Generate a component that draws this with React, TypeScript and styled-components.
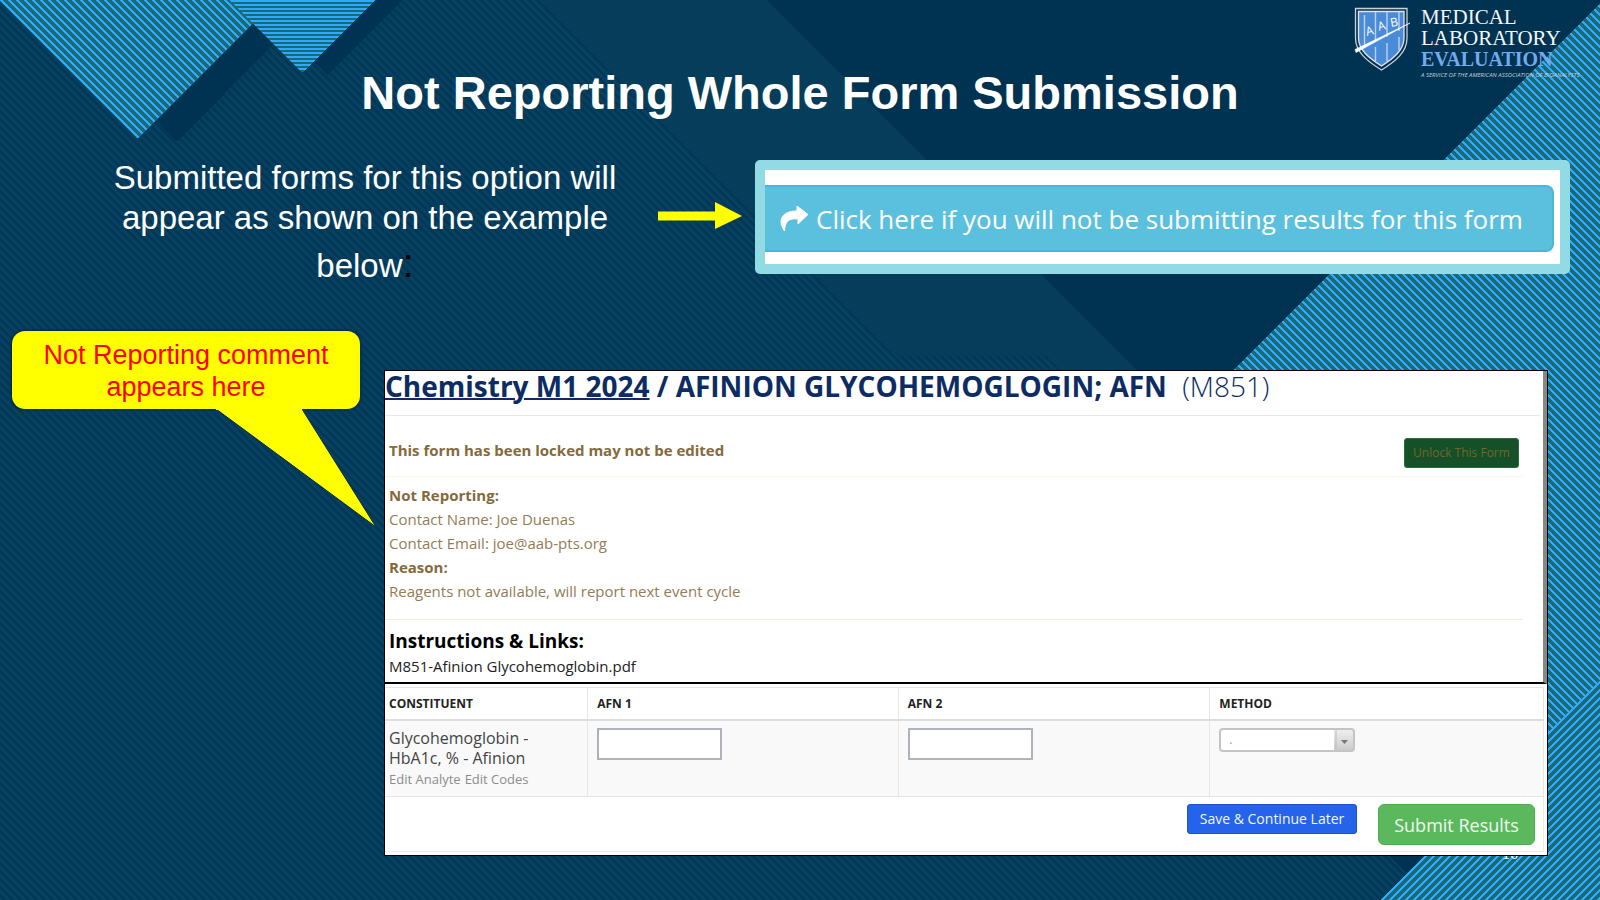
import React from "react";
import styled, { createGlobalStyle } from "styled-components";

const sans = `"Liberation Sans", Arial, sans-serif`;
const ui = `"Open Sans", "Noto Sans", sans-serif`;

const GlobalStyle = createGlobalStyle`
  *, *::before, *::after { box-sizing: border-box; }
  body { margin: 0; background: #003252; font-family: ${sans}; }
  h1, h2, h3, p { margin: 0; }
  button, input, select { font-family: inherit; margin: 0; }
`;

const Slide = styled.main`
  position: relative;
  isolation: isolate;
  overflow: hidden;
  min-height: 100vh;
  display: flex;
  flex-direction: column;
`;

const Backdrop = styled.svg`
  position: absolute;
  inset: 0;
  width: 100%;
  height: 100%;
  z-index: -2;
`;

const Header = styled.header`
  display: grid;
  grid-template-columns: 1fr auto 1fr;
  height: 158px;
`;

const Title = styled.h1`
  grid-column: 2;
  padding-top: 66px;
  font-size: 47px;
  line-height: 54px;
  font-weight: 700;
  color: #fff;
  white-space: nowrap;
`;

const Brand = styled.div`
  justify-self: end;
  display: flex;
  gap: 11px;
  padding-top: 7px;
  width: 246px;
`;

const Shield = styled.svg`
  flex: none;
  width: 56px;
  height: 64px;
`;

const BrandWords = styled.div`
  display: flex;
  flex-direction: column;
  font-family: "Liberation Serif", "Times New Roman", serif;
  white-space: nowrap;
`;

const BrandLine = styled.span<{ $accent?: boolean }>`
  font-size: ${(p) => (p.$accent ? 20 : 21)}px;
  line-height: 21px;
  color: ${(p) => (p.$accent ? "#72aaeb" : "#f4f7fa")};
  font-weight: ${(p) => (p.$accent ? 700 : 400)};
`;

const BrandNote = styled.span`
  font: italic 6px/10px ${ui};
  color: #c3d0db;
`;

const Intro = styled.section`
  display: grid;
  grid-template-columns: 586fr 84px 828fr;
  padding: 0 30px 0 72px;
`;

const Lead = styled.p`
  text-align: center;
  font-size: 33px;
  line-height: 40px;
  color: #fff;
`;

const LeadLine = styled.span<{ $height: number }>`
  display: block;
  line-height: ${(p) => p.$height}px;
`;

const Colon = styled.span`
  font-size: 40px;
  color: #000;
`;

const Arrow = styled.svg`
  width: 84px;
  height: 28px;
  margin-top: 44px;
`;

const Frame = styled.div`
  margin: 2px 0 0 13px;
  height: 114px;
  border: 10px solid #92dbe4;
  border-radius: 5px;
  background: #fff;
  padding: 15px 6px 12px 0;
`;

const DeclineButton = styled.button`
  display: flex;
  align-items: center;
  gap: 8px;
  width: 100%;
  height: 67px;
  padding: 0 0 0 15px;
  border: 2px solid #46b8da;
  border-left: 0;
  border-radius: 0 8px 8px 0;
  background: #5bc0de;
  color: #fff;
  font-family: ${ui};
  font-size: 26px;
  line-height: 36px;
  white-space: nowrap;
`;

const Example = styled.section`
  display: grid;
  grid-template-columns: 348px 1fr;
  gap: 24px;
  align-items: start;
  padding: 40px 52px 24px 12px;
`;

const Callout = styled.aside`
  position: relative;
  height: 78px;
  padding: 8px 0;
  border-radius: 13px;
  background: #ff0;
  box-shadow: 0 0 2px 1px #00294a;
  color: #f00;
  font-size: 27px;
  line-height: 32px;
  text-align: center;
`;

const Tail = styled.svg`
  position: absolute;
  left: 200px;
  top: 77px;
  width: 166px;
  height: 120px;
`;

const Panel = styled.article`
  margin-top: 39px;
  border: 1px solid #000;
  background: #fff;
  font-family: ${ui};
  min-width: 0;
`;

const Locked = styled.div`
  border-right: 4px solid #888;
  border-bottom: 2px solid #000;
  height: 313px;
`;

const FormTitle = styled.h2`
  height: 45px;
  margin-right: 3px;
  border-bottom: 1px solid #e8e8e8;
  font-size: 28px;
  line-height: 30px;
  font-weight: 700;
  color: #0d2c63;
  white-space: nowrap;

  a {
    color: inherit;
    text-decoration: underline;
    text-decoration-thickness: 2px;
  }
`;

const FormCode = styled.span`
  margin-left: 8px;
  font-weight: 300;
`;

const Notice = styled.div`
  margin-right: 20px;
  border-bottom: 1px solid #faf4e3;
  color: #846a3c;
  padding-left: 4px;
  font-size: 15px;
  line-height: 24px;
`;

const LockRow = styled(Notice)`
  display: flex;
  justify-content: space-between;
  align-items: flex-start;
  height: 61px;
  padding: 22px 4px 0;
`;

const Details = styled(Notice)`
  height: 143px;
  padding-top: 6px;
  border-color: #eeeedf;
`;

const Strong = styled.p`
  font-weight: 700;
`;

const Detail = styled.p`
  color: #947c54;
`;

const UnlockButton = styled.button`
  width: 115px;
  height: 30px;
  border: 1px solid #2b6a40;
  border-radius: 3px;
  padding: 0;
  background: #155028;
  color: #71662f;
  font-size: 12px;
  line-height: 20px;
`;

const Links = styled.div`
  padding: 8px 4px 0;
  font-size: 15px;
  line-height: 24px;

  a {
    color: #222;
    text-decoration: none;
  }
`;

const LinksTitle = styled.h3`
  font-size: 19px;
  line-height: 26px;
  color: #000;
`;

const Results = styled.table`
  width: calc(100% - 3px);
  margin-top: 3px;
  border-collapse: collapse;
  table-layout: fixed;
  border: 1px solid #e6e6e6;
  border-width: 1px 1px 1px 0;
`;

const HeadCell = styled.th<{ $width: number }>`
  width: ${(p) => p.$width}%;
  height: 32px;
  padding: 7px 9px 5px;
  border-left: 1px solid #e6e6e6;
  border-bottom: 2px solid #dedede;
  text-align: left;
  font-size: 12px;
  line-height: 18px;
  color: #222;

  &:first-child { padding-left: 4px; border-left: 0; }
`;

const Cell = styled.td`
  height: 77px;
  padding: 7px 9px 0;
  border-left: 1px solid #e6e6e6;
  background: #f9f9f9;
  vertical-align: top;
  font-size: 16px;
  line-height: 20px;
  color: #444;

  &:first-child { padding-left: 4px; border-left: 0; }
`;

const EditLinks = styled.div`
  display: flex;
  gap: 4px;
  font-size: 13px;
  line-height: 22px;

  a {
    color: #8c8c8c;
    text-decoration: none;
  }
`;

const ResultInput = styled.input`
  display: block;
  width: 125px;
  height: 32px;
  border: 2px solid #adb3b9;
  background: #fff;
`;

const MethodWrap = styled.div`
  position: relative;
  width: 136px;
`;

const MethodSelect = styled.select`
  display: block;
  appearance: none;
  width: 100%;
  height: 24px;
  border: 2px solid #c4c4c4;
  border-radius: 4px;
  padding: 0 8px;
  background: linear-gradient(#eee, #ccc) right / 19px 100% no-repeat, #fff;
  color: #999;
  font-size: 12px;
`;

const Caret = styled.svg`
  position: absolute;
  right: 0;
  top: 0;
  width: 22px;
  height: 24px;
  pointer-events: none;
`;

const Actions = styled.div`
  display: flex;
  justify-content: flex-end;
  align-items: flex-start;
  gap: 21px;
  width: calc(100% - 3px);
  height: 55px;
  margin-bottom: 3px;
  padding: 7px 8px 0;
  border: 1px solid #ebebeb;
  border-width: 0 1px 1px 0;
`;

const ActionButton = styled.button<{ $primary?: boolean }>`
  width: ${(p) => (p.$primary ? 157 : 170)}px;
  height: ${(p) => (p.$primary ? 41 : 30)}px;
  padding: 0;
  border: 1px solid ${(p) => (p.$primary ? "#4cae4c" : "#1d55c4")};
  border-radius: ${(p) => (p.$primary ? 6 : 3)}px;
  background: ${(p) => (p.$primary ? "#5cb85c" : "#2563eb")};
  color: #f2f7f4;
  font-size: ${(p) => (p.$primary ? 18 : 14)}px;
  line-height: 20px;
  white-space: nowrap;
`;

const PageNumber = styled.span`
  position: absolute;
  right: 82px;
  bottom: 37px;
  z-index: -1;
  color: #fff;
  font: 16px/18px "Liberation Serif", serif;
`;

const range = (n: number) => Array.from({ length: n }, (_, i) => i);

/* An 8px tile with one diagonal stripe, built from whole-pixel runs. */
function DiagonalTile(props: { id: string; base: string; stripe: string; up?: boolean }) {
  return (
    <pattern id={props.id} width="8" height="8" patternUnits="userSpaceOnUse">
      <rect width="8" height="8" fill={props.base} />
      {range(8).map((y) =>
        range(3).map((k) => (
          <rect
            key={`${y}-${k}`}
            x={((props.up ? 8 - y : y) + k) % 8}
            y={y}
            width="1"
            height="1"
            fill={props.stripe}
          />
        ))
      )}
    </pattern>
  );
}

function SlideBackdrop() {
  return (
    <Backdrop viewBox="0 0 1600 900" preserveAspectRatio="xMidYMid slice" shapeRendering="crispEdges" aria-hidden="true">
      <defs>
        <DiagonalTile id="night" base="#073f5e" stripe="#003657" />
        <DiagonalTile id="down" base="#1b6975" stripe="#2daaff" />
        <DiagonalTile id="up" base="#1b6975" stripe="#2daaff" up />
        <pattern id="level" width="8" height="4" patternUnits="userSpaceOnUse">
          <rect width="8" height="4" fill="#1b6975" />
          <rect width="8" height="2" fill="#2daaff" />
        </pattern>
      </defs>
      <rect width="1600" height="900" fill="#003252" />
      <path d="M0 0H766L1434 668V900H0Z" fill="#053d5a" />
      <path d="M0 0H538L894 356H1047L1591 900H0Z" fill="url(#night)" />
      <path d="M157 122L253 25L273 44L177 142Z" fill="#003252" />
      <path d="M314 62L376 0H402L327 75Z" fill="#003252" />
      <path d="M0 2V0H229L253 24L137 139Z" fill="url(#down)" />
      <path d="M229 0H376L302 73Z" fill="url(#level)" />
      <path d="M1600 3V680L1500 780V103Z" fill="url(#down)" />
      <path d="M1500 103V780L1220 600V383Z" fill="url(#down)" />
      <path d="M1390 856H1424L1406 873Z" fill="#003252" />
      <path d="M1600 680V900H1380Z" fill="url(#up)" />
    </Backdrop>
  );
}

function BrandMark() {
  return (
    <Brand>
      <Shield viewBox="0 0 56 64" role="img" aria-label="AAB">
        <path d="M1.500 1.500H53V31C53 45 42 54 27.500 63C13 54 1.500 45 1.500 31Z" fill="#0b2f4b" stroke="#c5d2dc" strokeWidth="1.300" />
        <path d="M4.500 4.500H50V31C50 43 40 51 27.500 59C15 51 4.500 43 4.500 31Z" fill="#4a8bd8" stroke="#dce7f2" strokeWidth="1.300" />
        <path d="M10.500 8V40M21.500 5V35M21.500 40V54M33 5V30M33 36V54M45 5V24M45 30V43" stroke="#b9d3f1" strokeWidth="1.400" fill="none" />
        <path d="M1 42.500L56 16L2 45.500Z" fill="#fff" stroke="#fff" strokeWidth="0.600" />
        <g fill="#fff" fontFamily="Open Sans, sans-serif" fontSize="12">
          <text x="13" y="29" transform="rotate(-16 13 29)">A</text>
          <text x="25" y="24" transform="rotate(-16 25 24)">A</text>
          <text x="37" y="20" transform="rotate(-10 37 20)">B</text>
        </g>
      </Shield>
      <BrandWords>
        <BrandLine>MEDICAL</BrandLine>
        <BrandLine>LABORATORY</BrandLine>
        <BrandLine $accent>EVALUATION</BrandLine>
        <BrandNote>A SERVICE OF THE AMERICAN ASSOCIATION OF BIOANALYSTS</BrandNote>
      </BrandWords>
    </Brand>
  );
}

export default function App() {
  return (
    <Slide>
      <GlobalStyle />
      <SlideBackdrop />
      <Header>
        <Title>Not Reporting Whole Form Submission</Title>
        <BrandMark />
      </Header>

      <Intro>
        <Lead>
          <LeadLine $height={40}>Submitted forms for this option will</LeadLine>
          <LeadLine $height={40}>appear as shown on the example</LeadLine>
          <LeadLine $height={50}>
            below<Colon>:</Colon>
          </LeadLine>
        </Lead>
        <Arrow viewBox="0 0 84 28" aria-hidden="true">
          <path d="M0 9.500H57V0L84 14L57 27V18.500H0Z" fill="#ff0" />
        </Arrow>
        <Frame>
          <DeclineButton type="button">
            <svg width="28" height="26" viewBox="0 0 28 26" aria-hidden="true">
              <path d="M17 0L28 8.500L18 18V13C9 12 5 15 4.500 25C-3 14 2 5 17 5Z" fill="#fff" stroke="#fff" strokeWidth="1" strokeLinejoin="round" />
            </svg>
            Click here if you will not be submitting results for this form
          </DeclineButton>
        </Frame>
      </Intro>

      <Example>
        <Callout>
          Not Reporting comment
          <br />
          appears here
          <Tail viewBox="0 0 166 120" aria-hidden="true">
            <path d="M4 1L164 119L90 1" fill="#ff0" stroke="#00294a" strokeWidth="1" />
            <path d="M4 0H90V2H4Z" fill="#ff0" />
          </Tail>
        </Callout>

        <Panel>
          <Locked>
            <FormTitle>
              <a href="#chemistry">Chemistry M1 2024</a> / AFINION GLYCOHEMOGLOGIN; AFN <FormCode>(M851)</FormCode>
            </FormTitle>
            <LockRow>
              <Strong>This form has been locked may not be edited</Strong>
              <UnlockButton type="button">Unlock This Form</UnlockButton>
            </LockRow>
            <Details>
              <Strong>Not Reporting:</Strong>
              <Detail>Contact Name: Joe Duenas</Detail>
              <Detail>Contact Email: joe@aab-pts.org</Detail>
              <Strong>Reason:</Strong>
              <Detail>Reagents not available, will report next event cycle</Detail>
            </Details>
            <Links>
              <LinksTitle>Instructions &amp; Links:</LinksTitle>
              <a href="#instructions">M851-Afinion Glycohemoglobin.pdf</a>
            </Links>
          </Locked>

          <Results>
            <thead>
              <tr>
                <HeadCell $width={17.5}>CONSTITUENT</HeadCell>
                <HeadCell $width={26.8}>AFN 1</HeadCell>
                <HeadCell $width={26.9}>AFN 2</HeadCell>
                <HeadCell $width={28.8}>METHOD</HeadCell>
              </tr>
            </thead>
            <tbody>
              <tr>
                <Cell>
                  Glycohemoglobin -
                  <br />
                  HbA1c, % - Afinion
                  <EditLinks>
                    <a href="#analyte">Edit Analyte</a>
                    <a href="#codes">Edit Codes</a>
                  </EditLinks>
                </Cell>
                <Cell>
                  <ResultInput type="text" aria-label="AFN 1" />
                </Cell>
                <Cell>
                  <ResultInput type="text" aria-label="AFN 2" />
                </Cell>
                <Cell>
                  <MethodWrap>
                    <MethodSelect aria-label="Method">
                      <option>.</option>
                    </MethodSelect>
                    <Caret viewBox="0 0 22 24" aria-hidden="true">
                      <path d="M3 2V22" stroke="#bbb" />
                      <path d="M8 12H15L11.500 16Z" fill="#777" />
                    </Caret>
                  </MethodWrap>
                </Cell>
              </tr>
            </tbody>
          </Results>
          <Actions>
            <ActionButton type="button">Save &amp; Continue Later</ActionButton>
            <ActionButton type="submit" $primary>
              Submit Results
            </ActionButton>
          </Actions>
        </Panel>
      </Example>
      <PageNumber>16</PageNumber>
    </Slide>
  );
}
